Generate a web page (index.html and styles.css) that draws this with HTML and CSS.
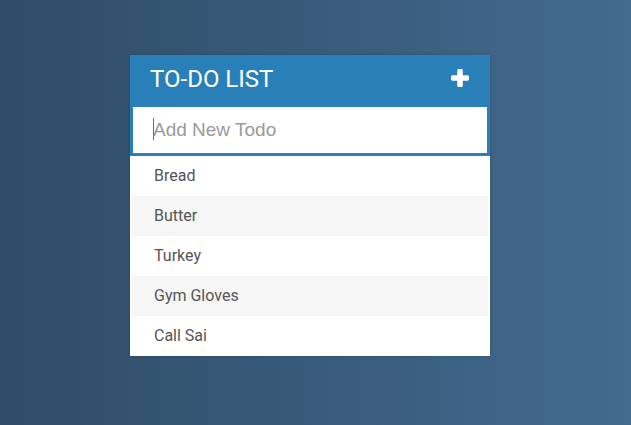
FILE: index.html
```html
<!DOCTYPE html>
<html>
<head>
<meta charset="utf-8">
<link rel="stylesheet" href="styles.css">
</head>
<body>
<div class="container">
  <h1 class="title">To-Do List <span class="plus"><svg width="18" height="18" viewBox="0 0 18 18"><path d="M9 2v14M2 9h14" stroke="#fff" stroke-width="5.5" stroke-linecap="round" fill="none"/></svg></span></h1>
  <div class="field">
    <input class="new-todo" type="text" placeholder="Add New Todo">
    <span class="caret"></span>
  </div>
  <ul class="todos">
    <li class="todo"><span class="del"></span>Bread</li>
    <li class="todo"><span class="del"></span>Butter</li>
    <li class="todo"><span class="del"></span>Turkey</li>
    <li class="todo"><span class="del"></span>Gym Gloves</li>
    <li class="todo"><span class="del"></span>Call Sai</li>
  </ul>
</div>
</body>
</html>
```
FILE: styles.css
```css
html, body {
  margin: 0;
  height: 100%;
}
body {
  font-family: Roboto, "Liberation Sans", sans-serif;
  background: linear-gradient(to right, #2e4c67, #436a8f);
  overflow: hidden;
}
.container {
  width: 360px;
  margin: 55px 0 0 130px;
  background: #fff;
  box-shadow: 0 0 3px rgba(0,0,0,0.15);
}
.title {
  margin: 0;
  background: #2980b9;
  color: #fff;
  font-size: 24px;
  font-weight: 400;
  text-transform: uppercase;
  line-height: 29px;
  padding: 10px 20px;
  display: flex;
  justify-content: space-between;
  align-items: center;
}
.plus {
  display: flex;
  margin-right: 1px;
  margin-top: -4px;
}
.field {
  position: relative;
  background: #2980b9;
}
.new-todo {
  display: block;
  width: 100%;
  box-sizing: border-box;
  border: 3px solid #2980b9;
  background: #fff;
  font-family: "Liberation Sans", Arial, sans-serif;
  font-size: 19px;
  line-height: 20px;
  height: 52px;
  padding: 13px 13px 13px 20px;
  color: #2980b9;
  outline: none;
  margin: 0;
}
.new-todo::placeholder {
  color: #9a9a9a;
}
.caret {
  position: absolute;
  left: 23px;
  top: 14px;
  width: 1px;
  height: 22px;
  background: #2980b9;
}
.todos {
  list-style: none;
  margin: 0;
  padding: 0 2px;
}
.todo {
  height: 40px;
  line-height: 40px;
  font-size: 16px;
  color: #555;
  background: #fff;
}
.todo:nth-child(2n) {
  background: #f6f6f6;
}
.del {
  display: inline-block;
  width: 0;
  margin-right: 22px;
}
```
